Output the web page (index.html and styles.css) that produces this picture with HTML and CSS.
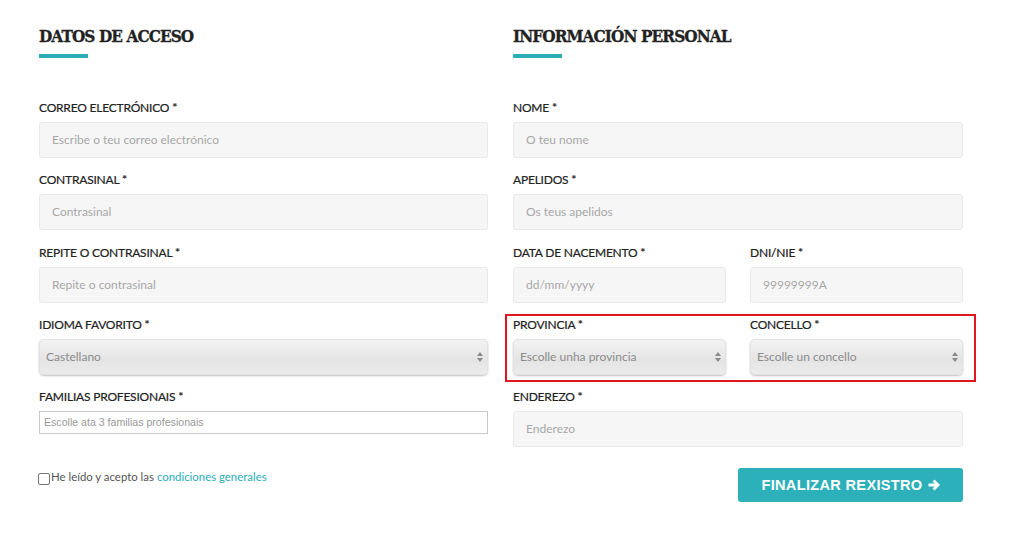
FILE: index.html
```html
<!DOCTYPE html>
<html lang="gl">
<head>
  <meta charset="UTF-8" />
  <title>Rexistro</title>
  <link rel="stylesheet" href="styles.css">
</head>
<body>
  <form class="register">
    <div class="col">
      <h2>DATOS DE ACCESO</h2>
      <div class="bar"></div>

      <div class="field">
        <label>CORREO ELECTRÓNICO *</label>
        <div class="input">Escribe o teu correo electrónico</div>
      </div>
      <div class="field">
        <label>CONTRASINAL *</label>
        <div class="input">Contrasinal</div>
      </div>
      <div class="field">
        <label>REPITE O CONTRASINAL *</label>
        <div class="input">Repite o contrasinal</div>
      </div>
      <div class="field">
        <label>IDIOMA FAVORITO *</label>
        <div class="select">Castellano
          <svg class="arrows" width="6" height="10" viewBox="0 0 6 10"><path d="M3 0L6 4H0z M3 10L0 6H6z" fill="#8a8a8a"/></svg>
        </div>
      </div>
      <div class="field">
        <label>FAMILIAS PROFESIONAIS *</label>
        <div class="plain">Escolle ata 3 familias profesionais</div>
      </div>

      <div class="terms">
        <span class="check"></span>He leído y acepto las <a href="#">condiciones generales</a>
      </div>
    </div>

    <div class="col">
      <h2>INFORMACIÓN PERSONAL</h2>
      <div class="bar"></div>

      <div class="field">
        <label>NOME *</label>
        <div class="input">O teu nome</div>
      </div>
      <div class="field">
        <label>APELIDOS *</label>
        <div class="input">Os teus apelidos</div>
      </div>
      <div class="pair">
        <div class="field">
          <label>DATA DE NACEMENTO *</label>
          <div class="input">dd/mm/yyyy</div>
        </div>
        <div class="field">
          <label>DNI/NIE *</label>
          <div class="input">99999999A</div>
        </div>
      </div>
      <div class="pair marked">
        <div class="field">
          <label>PROVINCIA *</label>
          <div class="select">Escolle unha provincia
            <svg class="arrows" width="6" height="10" viewBox="0 0 6 10"><path d="M3 0L6 4H0z M3 10L0 6H6z" fill="#8a8a8a"/></svg>
          </div>
        </div>
        <div class="field">
          <label>CONCELLO *</label>
          <div class="select">Escolle un concello
            <svg class="arrows" width="6" height="10" viewBox="0 0 6 10"><path d="M3 0L6 4H0z M3 10L0 6H6z" fill="#8a8a8a"/></svg>
          </div>
        </div>
        <div class="highlight"></div>
      </div>
      <div class="field">
        <label>ENDEREZO *</label>
        <div class="input">Enderezo</div>
      </div>

      <div class="actions">
        <button type="button">FINALIZAR REXISTRO
          <svg width="12" height="12" viewBox="0 0 12 12"><path d="M0.5 6H10 M5.6 1.6L10 6L5.6 10.4" stroke="#fff" stroke-width="2.8" fill="none"/></svg>
        </button>
      </div>
    </div>
  </form>
</body>
</html>
```

FILE: styles.css
```css
body {
  margin: 0;
  background: #fff;
  font-family: Lato, "Open Sans", sans-serif;
  color: #333;
}
.register {
  display: grid;
  grid-template-columns: 449px 450px;
  column-gap: 25px;
  padding: 24px 0 0 39px;
}
h2 {
  margin: 0;
  font-family: "DejaVu Serif Condensed", "DejaVu Serif", serif;
  font-stretch: condensed;
  font-size: 17px;
  font-weight: bold;
  letter-spacing: -0.9px;
  line-height: 24px;
  color: #222;
  -webkit-text-stroke: 0.3px #222;
}
.bar {
  width: 49px;
  height: 4px;
  background: #2aaeb8;
  margin-top: 6px;
  margin-bottom: 42px;
}
.field {
  margin-bottom: 14.3px;
}
.field label {
  display: block;
  font-size: 12px;
  line-height: 15px;
  height: 15px;
  margin-bottom: 7px;
  letter-spacing: -0.2px;
  color: #222;
  -webkit-text-stroke: 0.2px #222;
}
.input {
  height: 36px;
  box-sizing: border-box;
  background: #f6f6f6;
  border: 1px solid #e9e9e9;
  border-radius: 3px;
  padding-left: 12px;
  font-size: 12px;
  line-height: 34px;
  color: #a8a8a8;
}
.select {
  position: relative;
  height: 36px;
  box-sizing: border-box;
  border-radius: 5px;
  background: linear-gradient(#f4f4f4, #e4e4e4 60%, #ececec);
  box-shadow: 0 1px 2px rgba(0,0,0,0.25), inset 0 0 0 1px #e2e2e2;
  padding-left: 7px;
  font-size: 12px;
  line-height: 36px;
  color: #8c8c8c;
}
.arrows {
  position: absolute;
  right: 5px;
  top: 13px;
}
.plain {
  height: 23px;
  box-sizing: border-box;
  border: 1px solid #c9c9c9;
  padding-left: 4px;
  font-family: "Liberation Sans", Arial, sans-serif;
  font-size: 10.6px;
  line-height: 21px;
  color: #999;
}
.pair {
  display: grid;
  grid-template-columns: 213px 213px;
  column-gap: 24px;
}
.marked {
  position: relative;
}
.highlight {
  position: absolute;
  left: -8px;
  right: -13px;
  top: -3px;
  bottom: 7px;
  border: 2px solid #e0161f;
}
.terms {
  display: flex;
  align-items: center;
  margin-top: 34px;
  font-size: 11.4px;
  color: #555;
}
.terms a {
  color: #2aaeb8;
  text-decoration: none;
  margin-left: 3px;
}
.check {
  width: 10px;
  height: 10px;
  border: 1px solid #777;
  border-radius: 2px;
  margin: 5px 1px 0 -1px;
}
.actions {
  display: flex;
  justify-content: flex-end;
  margin-top: 20.5px;
}
button {
  width: 225px;
  height: 34px;
  border: none;
  border-radius: 3px;
  background: #2cb0b9;
  color: #fff;
  font-family: "Liberation Sans", Arial, sans-serif;
  font-weight: bold;
  font-size: 14.6px;
  letter-spacing: 0.3px;
  display: flex;
  align-items: center;
  justify-content: center;
  gap: 5px;
}
```
